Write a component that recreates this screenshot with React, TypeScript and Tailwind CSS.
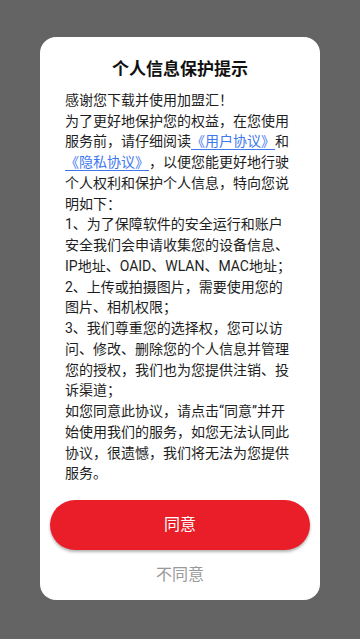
import React from "react";

const L = ({ children }: { children: React.ReactNode }) => (
  <span className="text-[#3d78ef] underline decoration-[#3d78ef] underline-offset-[3px]">{children}</span>
);

export default function App() {
  const lines: React.ReactNode[] = [
    "感谢您下载并使用加盟汇！",
    "为了更好地保护您的权益，在您使用",
    <>服务前，请仔细阅读<L>《用户协议》</L>和</>,
    <><L>《隐私协议》</L><span className="inline-block">，</span>以便您能更好地行驶</>,
    "个人权利和保护个人信息，特向您说",
    "明如下：",
    "1、为了保障软件的安全运行和账户",
    "安全我们会申请收集您的设备信息、",
    "IP地址、OAID、WLAN、MAC地址；",
    "2、上传或拍摄图片，需要使用您的",
    "图片、相机权限；",
    "3、我们尊重您的选择权，您可以访",
    "问、修改、删除您的个人信息并管理",
    "您的授权，我们也为您提供注销、投",
    "诉渠道；",
    "如您同意此协议，请点击“同意”并开",
    "始使用我们的服务，如您无法认同此",
    "协议，很遗憾，我们将无法为您提供",
    "服务。",
  ];
  return (
    <div className="w-[360px] h-[639px] bg-[#646464] pt-[37px] overflow-hidden font-['Roboto','Noto_Sans_CJK_SC',sans-serif] [text-spacing-trim:space-all]">
      <div className="mx-[40px] w-[280px] h-[563px] bg-white rounded-[16px] flex flex-col pt-[21px]">
        <div className="h-[24px] flex items-center justify-center text-[17px] font-bold text-[#111]">个人信息保护提示</div>
        <div className="mt-[8px] px-[25px] text-[14px] text-[#1e1e1e] whitespace-nowrap">
          {lines.map((l, i) => (
            <div key={i} className="h-[20.75px] flex items-center">
              <span>{l}</span>
            </div>
          ))}
        </div>
        <div className="mt-[16px] mx-[10px] h-[50px] rounded-full bg-[#e91e28] text-white text-[16px] flex items-center justify-center shadow-[0_2px_3px_rgba(0,0,0,0.3)]">
          同意
        </div>
        <div className="mt-[13px] h-[24px] flex items-center justify-center text-[16px] text-[#999]">不同意</div>
      </div>
    </div>
  );
}
